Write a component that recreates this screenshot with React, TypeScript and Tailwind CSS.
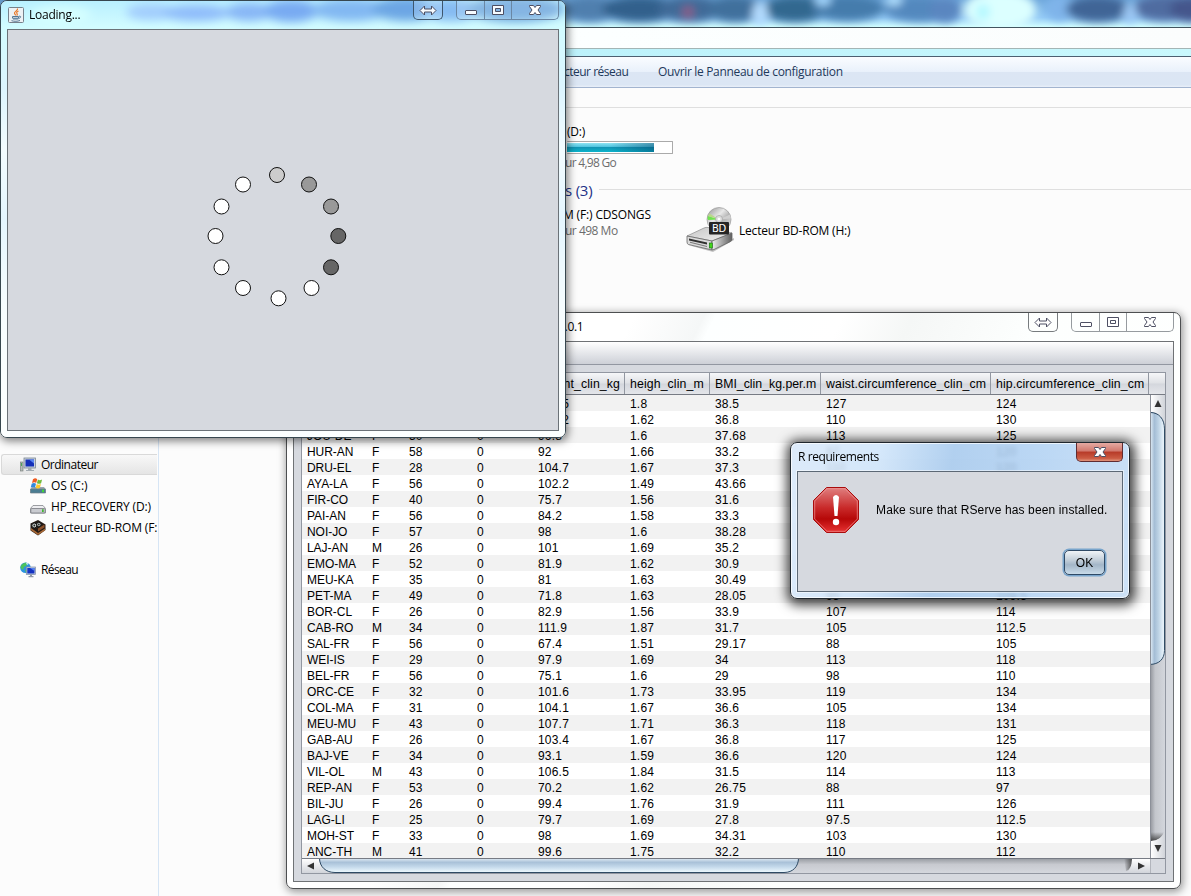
import React from "react";

type Row = [string, string, string, string, string, string, string, string, string];

const rows: Row[] = [
  ["", "", "", "", "104.5", "1.8", "38.5", "127", "124"],
  ["", "", "", "", "102.2", "1.62", "36.8", "110", "130"],
  ["JOU-DE", "F", "50", "0", "96.8", "1.6", "37.68", "113", "125"],
  ["HUR-AN", "F", "58", "0", "92", "1.66", "33.2", "97", "120"],
  ["DRU-EL", "F", "28", "0", "104.7", "1.67", "37.3", "110", "120"],
  ["AYA-LA", "F", "56", "0", "102.2", "1.49", "43.66", "", ""],
  ["FIR-CO", "F", "40", "0", "75.7", "1.56", "31.6", "", ""],
  ["PAI-AN", "F", "56", "0", "84.2", "1.58", "33.3", "", ""],
  ["NOI-JO", "F", "57", "0", "98", "1.6", "38.28", "", ""],
  ["LAJ-AN", "M", "26", "0", "101", "1.69", "35.2", "", ""],
  ["EMO-MA", "F", "52", "0", "81.9", "1.62", "30.9", "", ""],
  ["MEU-KA", "F", "35", "0", "81", "1.63", "30.49", "", ""],
  ["PET-MA", "F", "49", "0", "71.8", "1.63", "28.05", "95", "109.5"],
  ["BOR-CL", "F", "26", "0", "82.9", "1.56", "33.9", "107", "114"],
  ["CAB-RO", "M", "34", "0", "111.9", "1.87", "31.7", "105", "112.5"],
  ["SAL-FR", "F", "56", "0", "67.4", "1.51", "29.17", "88", "105"],
  ["WEI-IS", "F", "29", "0", "97.9", "1.69", "34", "113", "118"],
  ["BEL-FR", "F", "56", "0", "75.1", "1.6", "29", "98", "110"],
  ["ORC-CE", "F", "32", "0", "101.6", "1.73", "33.95", "119", "134"],
  ["COL-MA", "F", "31", "0", "104.1", "1.67", "36.6", "105", "134"],
  ["MEU-MU", "F", "43", "0", "107.7", "1.71", "36.3", "118", "131"],
  ["GAB-AU", "F", "26", "0", "103.4", "1.67", "36.8", "117", "125"],
  ["BAJ-VE", "F", "34", "0", "93.1", "1.59", "36.6", "120", "124"],
  ["VIL-OL", "M", "43", "0", "106.5", "1.84", "31.5", "114", "113"],
  ["REP-AN", "F", "53", "0", "70.2", "1.62", "26.75", "88", "97"],
  ["BIL-JU", "F", "26", "0", "99.4", "1.76", "31.9", "111", "126"],
  ["LAG-LI", "F", "25", "0", "79.7", "1.69", "27.8", "97.5", "112.5"],
  ["MOH-ST", "F", "33", "0", "98", "1.69", "34.31", "103", "130"],
  ["ANC-TH", "M", "41", "0", "99.6", "1.75", "32.2", "110", "112"],
];

const segoe = "font-['Open_Sans','Noto_Sans',sans-serif] text-[12px] leading-4 whitespace-nowrap";
const arial = "font-['Liberation_Sans',Arial,sans-serif] text-[12px] leading-4 whitespace-nowrap";

function GlassBackdrop() {
  const dark: [number, number, number, string][] = [
    [590, 9, 28, "#4f7fae"], [640, 9, 38, "#33608c"], [690, 9, 32, "#3f6a98"], [735, 9, 28, "#3f6f9c"],
    [795, 9, 32, "#33678f"], [848, 8, 36, "#447cac"], [920, 9, 36, "#5288be"], [945, 10, 16, "#5a86c0"],
    [1060, 8, 14, "#7fb4ea"], [1098, 9, 32, "#3f6596"], [1165, 8, 32, "#506ca0"], [1190, 9, 20, "#44578c"],
  ];
  return (
    <svg className="block h-[27px] w-full shrink-0" viewBox="0 0 1191 27" preserveAspectRatio="none">
      <defs>
        <filter id="soft" x="-20%" y="-60%" width="140%" height="220%"><feGaussianBlur stdDeviation="4.500" /></filter>
        <linearGradient id="sky" x1="0" y1="0" x2="0" y2="1">
          <stop offset="0" stopColor="#6fa8dc" /><stop offset="0.65" stopColor="#93caf6" /><stop offset="1" stopColor="#d3ffff" />
        </linearGradient>
      </defs>
      <rect width="1191" height="27" fill="url(#sky)" />
      <g filter="url(#soft)">
        {dark.map(([x, y, r, c]) => <ellipse key={x} cx={x} cy={y} rx={r} ry="13" fill={c} />)}
        <circle cx="688" cy="12" r="6" fill="#8c5b86" />
        <ellipse cx="760" cy="14" rx="8" ry="12" fill="#b4dcff" />
        <ellipse cx="823" cy="0" rx="8" ry="6" fill="#a5d8ff" />
        <ellipse cx="894" cy="0" rx="8" ry="6" fill="#b1e0ff" />
        <ellipse cx="1000" cy="10" rx="36" ry="20" fill="#dcffff" />
        <ellipse cx="983" cy="12" rx="7" ry="8" fill="#b4f8ff" />
        <ellipse cx="1130" cy="14" rx="7" ry="10" fill="#9cc8f5" />
      </g>
    </svg>
  );
}

function ComputerIcon() {
  return (
    <svg width="16" height="16" viewBox="0 0 16 16">
      <rect x="0.500" y="5" width="2.500" height="9" fill="#b7bdb8" stroke="#6f7774" strokeWidth=".6" />
      <rect x="1" y="6" width="1" height="3" fill="#4ca65a" />
      <rect x="4" y="1" width="11.500" height="10" fill="#c9d2dc" stroke="#7b8794" strokeWidth=".8" />
      <rect x="5.500" y="2.500" width="8.500" height="7" fill="#1630b8" />
      <path d="M9 2.500h5v4z" fill="#5b86f2" />
      <path d="M8 11h3.500v2H14v1H6v-1h2z" fill="#a3abb2" />
    </svg>
  );
}

function OsDriveIcon() {
  return (
    <svg width="16" height="16" viewBox="0 0 16 16">
      <path d="M2 9h12l1.500 2v4h-15v-4z" fill="#9aa7ae" />
      <path d="M.5 11h15v4h-15z" fill="#4b7d92" stroke="#707f87" strokeWidth=".7" />
      <rect x="12" y="11.600" width="2" height="2.600" fill="#43d339" />
      <path d="M3 1.200c2-1.400 3.200-.8 4.200 0L6.200 5C5 4 4 4 2 5z" fill="#ef5a22" />
      <path d="M7.900 1.600c1.500.8 2.700.7 4.200-.1l-1 3.800c-1.500.8-2.700.7-4.200 0z" fill="#72bb3b" />
      <path d="M1.700 5.700c1.800-.9 3-.7 4.300 0l-1 3.800c-1.500-.8-2.700-.7-4.300.1z" fill="#3288dd" />
      <path d="M6.700 6c1.400.9 2.700.8 4.200 0l-1 3.800c-1.500.8-2.700.8-4.200-.1z" fill="#ffc82a" />
    </svg>
  );
}

function DriveIcon() {
  return (
    <svg width="16" height="16" viewBox="0 0 16 16">
      <path d="M3 6.500h10l2.500 3v4.500h-15V9.500z" fill="#ededf0" stroke="#85888d" strokeWidth=".8" />
      <rect x=".8" y="9.500" width="14.400" height="4.500" rx="1" fill="#c9cbd0" stroke="#777a80" strokeWidth=".8" />
      <rect x="12" y="10.300" width="1.700" height="2.700" fill="#3fb62f" />
    </svg>
  );
}

function GameIcon() {
  return (
    <svg width="16" height="16" viewBox="0 0 16 16">
      <path d="M.5 3.500 8 0l7.500 4.500V10L8 15.500.5 10.500z" fill="#241a14" />
      <path d="m1 8 7 5 7-4.500v2L8 15l-7-4.700z" fill="#a76836" />
      <path d="m8 8.500 6.500-4v3L8 11.500z" fill="#8b5029" />
      <circle cx="4.300" cy="5.500" r="2.500" fill="#c9cdc9" stroke="#111" /><circle cx="8.800" cy="4.500" r="2.300" fill="#9da29f" stroke="#111" />
      <circle cx="4.300" cy="5.500" r=".9" fill="#222" /><circle cx="8.800" cy="4.500" r=".8" fill="#222" />
    </svg>
  );
}

function NetworkIcon() {
  return (
    <svg width="16" height="16" viewBox="0 0 16 16">
      <circle cx="5.500" cy="5.800" r="5.300" fill="#2c93e0" />
      <path d="M2 2.500C4 .5 7 .3 8 1.500L6 4 4 5 3 8 .6 6C.5 4.500 1 3.500 2 2.500zM5 8l3-1v3l-2 1z" fill="#4cc35c" />
      <path d="M6 1c1.500 0 2 .4 2.600 1L7 3z" fill="#cfeeff" />
      <rect x="6.300" y="5" width="9.200" height="7.500" fill="#c4cfe0" stroke="#7988a5" strokeWidth=".7" />
      <rect x="7.300" y="6" width="7.200" height="5.500" fill="#1432c2" /><path d="M10 6h4.500v3z" fill="#5482ef" />
      <path d="M10 12.500h2V14h1.500v1.200h-5V14H10z" fill="#9099a8" />
    </svg>
  );
}

function BdDriveIcon() {
  return (
    <svg width="48" height="46" viewBox="0 0 48 46">
      <defs>
        <linearGradient id="bdtop" x1="0" y1="0" x2="1" y2="1"><stop offset="0" stopColor="#c6c6c6" /><stop offset="1" stopColor="#f0f0f0" /></linearGradient>
        <linearGradient id="bdside" x1="0" y1="0" x2="1" y2="0"><stop offset="0" stopColor="#ededed" /><stop offset="1" stopColor="#606060" /></linearGradient>
        <linearGradient id="disc" x1="0" y1="0" x2="1" y2="1"><stop offset="0" stopColor="#8e8e8e" /><stop offset=".4" stopColor="#e8e8e8" /><stop offset=".6" stopColor="#b5b5b5" /><stop offset="1" stopColor="#efefef" /></linearGradient>
      </defs>
      <path d="M2 38 27 45 48 33v-2L27 42z" fill="#555" opacity=".35" />
      <path d="M1 29 18 21q2-1 4-.5L46 26 26 34z" fill="url(#bdtop)" stroke="#8b8b8b" strokeWidth=".7" />
      <path d="M1 29 26 34v9L2.500 37.500Q1 37 1 35z" fill="#dadada" stroke="#646464" strokeWidth=".8" />
      <path d="m26 34 20-8v6.500q0 1-1.500 2L28 42.500l-2 .5z" fill="url(#bdside)" stroke="#646464" strokeWidth=".8" />
      <path d="m3 31.500 18 4v2L3 33.500z" fill="#303030" />
      <path d="m4 34.700 17 4.200v1L4 35.700z" fill="#777" />
      <rect x="23.300" y="36" width="3" height="5" fill="#43d51b" stroke="#176b12" strokeWidth=".6" />
      <circle cx="33" cy="12.500" r="12" fill="url(#disc)" stroke="#9a9a9a" strokeWidth=".7" />
      <path d="M33 12.500 22 9q-1 2 0 4z" fill="#70e34f" /><path d="m33 12.500-9.500-6-1.500 2.500z" fill="#b9d88a" /><path d="m33 12.500 11-5 1 4z" fill="#cfcfcf" />
      <circle cx="33" cy="12" r="3.500" fill="#ddd" stroke="#999" strokeWidth=".6" /><circle cx="33" cy="12" r="1.300" fill="#fff" />
      <rect x="23" y="15" width="20" height="12.500" rx="1" fill="#252525" />
      <text x="33" y="25" textAnchor="middle" fill="#fff" fontSize="10" fontFamily="DejaVu Sans, sans-serif">BD</text>
    </svg>
  );
}

function JavaIcon() {
  return (
    <svg width="16" height="16" viewBox="0 0 16 16" className="block">
      <rect x=".5" y=".5" width="15" height="15" rx="1" fill="#edf1f4" stroke="#76818b" />
      <path d="M9.500 1.500c1 2-3.500 3-3 4.700.2 1 1 1.300 1.200 2.300M10.500 4C8.500 5 8.300 5.500 9 6.500s.3 1.300-.2 2" fill="none" stroke="#e9792a" strokeWidth="1.200" />
      <path d="M4.500 9.500h6v1.700h-6zM5 12h5.300M3.500 13.700c3 .9 6 .7 8.500-.2M11 9.200c2.500-.5 2 1.800-.3 2.300" fill="none" stroke="#557996" strokeWidth="1" />
    </svg>
  );
}

function CaptionButtons({ faded = false }: { faded?: boolean }) {
  const line = faded ? "border-[#969b9f]" : "border-[#6a87a4]";
  const inner = faded ? "#fff" : "#f6fbff";
  const ink = "#4d4f63";
  return (
    <div className="flex">
      <div className={`flex h-[19px] w-[30px] justify-center rounded-b-[5px] border border-t-0 ${faded ? "border-[#777b7e]" : "border-[#3e566d] bg-white/15"}`}>
        <svg width="18" height="18" viewBox="0 0 18 18"><path d="M1 9.500 5.500 5v3h7V5l4.500 4.500-4.500 4.500v-3h-7v3z" fill={inner} stroke={ink} /></svg>
      </div>
      <div className={`ml-[13px] flex h-[19px] w-[103px] overflow-hidden rounded-b-[5px] border border-t-0 ${line} ${faded ? "" : "bg-white/15"}`}>
        <div className={`flex w-[28px] justify-center border-r ${line}`}>
          <svg width="14" height="18" viewBox="0 0 14 18"><rect x="1.500" y="9.500" width="11" height="4" rx=".5" fill={inner} stroke={ink} /></svg>
        </div>
        <div className={`flex w-[27px] justify-center border-r ${line}`}>
          <svg width="14" height="18" viewBox="0 0 14 18"><path d="M1.500 4.500h11v9h-11zM4.500 7.500v3h5v-3z" fill={inner} stroke={ink} fillRule="evenodd" /></svg>
        </div>
        <div className="flex grow justify-center"><CloseGlyph /></div>
      </div>
    </div>
  );
}

function CloseGlyph() {
  return (
    <svg width="14" height="18" viewBox="0 0 14 18">
      <path d="M1.500 4.500h4L7 6.500l1.500-2h4v1L10 9l2.500 3.500v1h-4L7 11.500l-1.500 2h-4v-1L4 9 1.500 5.500z" fill="#fff" stroke="#4d4f63" />
    </svg>
  );
}

function Explorer() {
  return (
    <div className="flex h-[896px] flex-col bg-[#fcfcfc]">
      <GlassBackdrop />
      <div className="h-[22px] shrink-0 border-t border-b border-t-[#42545f] border-b-[#a3b5b5] bg-gradient-to-r from-[#f9fcfc] via-[#fcffff] to-[#fbfdfd]" />
      <div className="h-[7px] shrink-0 bg-gradient-to-r from-[#b9e4fb] via-[#bdf2fb] to-[#c9f8fd]" />
      <div className={`flex h-[32px] shrink-0 items-center border-t border-b border-t-[#4d5f71] border-b-[#a2b4cf] bg-[linear-gradient(#fafcff_0%,#e9f1fb_49%,#dce6f4_50%,#dbe6f4_92%,#e9eff8_100%)] pl-[564px] text-[#1e395b] ${segoe}`}>
        <span className="w-[94px] tracking-[-0.5px]">cteur réseau</span>
        <span className="tracking-[-0.33px]">Ouvrir le Panneau de configuration</span>
      </div>
      <div className="flex min-h-0 grow">
        <nav className={`flex w-[159px] shrink-0 flex-col border-r border-[#d6e5f5] pt-[366px] tracking-[-0.15px] text-black ${segoe}`}>
          <div className="mr-px ml-px flex h-[21px] items-center gap-[5px] rounded-l-[3px] border border-r-0 border-[#d9d9d9] bg-gradient-to-b from-[#f8f8f8] to-[#e5e5e5] pl-[18px] tracking-[-0.5px]"><ComputerIcon />Ordinateur</div>
          <div className="flex h-[21px] items-center gap-[5px] overflow-hidden pl-[30px] tracking-[-0.05px]"><OsDriveIcon />OS (C:)</div>
          <div className="flex h-[21px] items-center gap-[5px] overflow-hidden pl-[30px]"><DriveIcon />HP_RECOVERY (D:)</div>
          <div className="flex h-[21px] items-center gap-[5px] overflow-hidden pl-[30px]"><span className="shrink-0"><GameIcon /></span><span className="w-[106px] overflow-hidden">Lecteur BD-ROM (F:</span></div>
          <div className="mt-[21px] flex h-[21px] items-center gap-[5px] pl-[20px] tracking-[-0.6px]"><NetworkIcon />Réseau</div>
        </nav>
        <main className={`flex grow flex-col pt-[19px] tracking-[-0.2px] ${segoe}`}>
          <div className="h-px bg-[#dfdfdf]" />
          <div className="mt-[16px] flex flex-col pl-[408px]">
            <span className="text-black">(D:)</span>
            <div className="mt-px flex h-[13px] w-[106px] rounded-[1px] border border-l-0 border-[#aaa] bg-white p-px pl-0">
              <div className="w-[87px] bg-[linear-gradient(90deg,transparent_50%,rgba(0,60,100,0.45)_100%),linear-gradient(#8fe3f2_0%,#45bfdc_49%,#1295b4_50%,#0bb4cb_100%)]" />
            </div>
            <span className="mt-px -ml-[2px] tracking-[-0.7px] text-[#6d6d6d]">ur 4,98 Go</span>
          </div>
          <div className="mt-[8px] flex h-[21px] items-center gap-[7px] pl-[406px] text-[15px] tracking-[-0.2px] text-[#1e3287]">
            <span>s (3)</span><div className="h-px grow bg-[#dfdfdf]" />
          </div>
          <div className="mt-[7px] flex pl-[404px]">
            <div className="flex w-[123px] flex-col">
              <span className="tracking-[-0.15px] text-black">M (F:) CDSONGS</span><span className="ml-[2px] tracking-[-0.5px] text-[#6d6d6d]">ur 498 Mo</span>
            </div>
            <BdDriveIcon />
            <span className="mt-[16px] ml-[5px] text-black">Lecteur BD-ROM (H:)</span>
          </div>
        </main>
      </div>
    </div>
  );
}

const cell = "shrink-0 border-r border-[#9297a1] pt-[3px] pl-[5px] h-full";

function DataWindow() {
  return (
    <section className="absolute top-[312px] left-[286px] flex h-[577px] w-[895px] flex-col rounded-[7px] border border-[#4d4f51] bg-[linear-gradient(115deg,#fff_0%,#fff_30%,#f5f7f7_36%,#fdffff_37%,#fff_48%,#f5f7f6_54%,#fdfffe_65%,#fff_100%)] px-[6px] pb-[6px] shadow-[1px_2px_9px_1px_rgba(0,0,0,0.4)]">
      <header className="flex h-[28px] shrink-0 justify-between">
        <span className={`mt-[6px] ml-[265px] tracking-[-0.3px] text-black ${segoe}`}>1.0.1</span>
        <CaptionButtons faded />
      </header>
      <div className="flex min-h-0 grow flex-col border border-[#6f7275] bg-[#d6d9df]">
        <div className="h-[23px] shrink-0 border-b border-[#9297a1] bg-gradient-to-b from-white to-[#cdd0d7]" />
        <div className={`mx-[7px] mt-[7px] mb-[7px] flex min-h-0 grow flex-col border border-[#9297a1] text-black ${arial}`}>
          <div className="flex h-[22px] shrink-0 border-b border-[#777b84] bg-[linear-gradient(#f6f7f9_0%,#dfe1e5_48%,#d4d7dd_52%,#e4e6ea_100%)] text-[12.300px] tracking-[0.110px]">
            <div className={`${cell} w-[323px] pr-[4px] text-right`}>weight_clin_kg</div>
            <div className={`${cell} w-[85px]`}>heigh_clin_m</div>
            <div className={`${cell} w-[111px] tracking-[0px]`}>BMI_clin_kg.per.m</div>
            <div className={`${cell} w-[170px]`}>waist.circumference_clin_cm</div>
            <div className={`${cell} w-[158px]`}>hip.circumference_clin_cm</div>
          </div>
          <div className="flex min-h-0 grow">
            <div className="flex w-[848px] shrink-0 flex-col overflow-hidden">
              {rows.map((r, i) => (
                <div key={i} className="grid h-[16px] shrink-0 grid-cols-[65px_37px_68px_61px_92px_85px_111px_170px_150px] bg-white pt-px pl-[5px] leading-4 odd:bg-[#f2f2f2]">
                  {r.map((v, j) => <span key={j} className={j === 0 ? "tracking-[-0.050px]" : "tracking-[0.200px]"}>{v}</span>)}
                </div>
              ))}
            </div>
            <VerticalScroll />
          </div>
          <HorizontalScroll />
        </div>
      </div>
    </section>
  );
}

function VerticalScroll() {
  return (
    <div className="flex w-[15px] shrink-0 flex-col border-l border-[#8c9099] bg-[linear-gradient(90deg,#9a9da4_0%,#c3c6cc_30%,#d3d6dc_100%)]">
      <svg width="14" height="464" viewBox="0 0 14 464" className="block">
        <defs>
          <linearGradient id="vt" x1="0" x2="1"><stop offset="0" stopColor="#e6f0f8" /><stop offset=".3" stopColor="#a4bdd5" /><stop offset=".6" stopColor="#bfd4e6" /><stop offset="1" stopColor="#f0f9ff" /></linearGradient>
          <linearGradient id="vb" x1="0" x2="1"><stop offset="0" stopColor="#fff" /><stop offset="1" stopColor="#d1d4da" /></linearGradient>
          <linearGradient id="vs" x1="0" y1="0" x2="0" y2="1"><stop offset="0" stopColor="#333" stopOpacity="0" /><stop offset="1" stopColor="#333" stopOpacity=".85" /></linearGradient>
        </defs>
        <path d="M0 0h14v30Q10 17 0 17z" fill="url(#vb)" /><path d="m3.500 12 3.500-7 3.500 7z" fill="#333" />
        <path d="M-1 17.500C8 17.500 13.500 24 13.500 34V256c0 9-6 14-14.500 14z" fill="url(#vt)" stroke="#2e4a64" />
        <path d="M0 438h13Q10 447 0 447z" fill="url(#vs)" />
        <path d="M0 447Q10 447 14 437v27H0z" fill="url(#vb)" /><path d="m3.500 451 3.500 7 3.500-7z" fill="#333" />
      </svg>
    </div>
  );
}

function HorizontalScroll() {
  return (
    <div className="h-[15px] shrink-0 border-t border-[#777b84] bg-[#d6d9df]">
      <svg width="862" height="14" viewBox="0 0 862 14" className="block">
        <defs>
          <linearGradient id="ht" x1="0" y1="0" x2="0" y2="1"><stop offset="0" stopColor="#e6f0f8" /><stop offset=".3" stopColor="#a9c1d8" /><stop offset=".6" stopColor="#c3d8ea" /><stop offset="1" stopColor="#effaff" /></linearGradient>
          <linearGradient id="hb" x1="0" y1="0" x2="0" y2="1"><stop offset="0" stopColor="#fff" /><stop offset="1" stopColor="#d1d4da" /></linearGradient>
          <linearGradient id="htr" x1="0" y1="0" x2="0" y2="1"><stop offset="0" stopColor="#9b9fa5" /><stop offset=".4" stopColor="#c8cad0" /><stop offset="1" stopColor="#d4d7dd" /></linearGradient>
          <linearGradient id="hs"><stop offset="0" stopColor="#333" stopOpacity="0" /><stop offset="1" stopColor="#333" stopOpacity=".8" /></linearGradient>
        </defs>
        <rect width="848" height="14" fill="url(#htr)" />
        <path d="M0 0h17q1 10 13 14H0z" fill="url(#hb)" /><path d="m12 3.500-7 3.500 7 3.500z" fill="#333" />
        <path d="M17.500-1C17.500 8 24 13.500 33 13.500H482c9 0 14.500-6 14.500-14.500z" fill="url(#ht)" stroke="#2e4a64" />
        <path d="M822 0h8q0 10-6 12z" fill="url(#hs)" />
        <path d="M830 0q0 10-6 14h24V0z" fill="url(#hb)" /><path d="m836 3.500 7 3.500-7 3.500z" fill="#333" />
        <path d="M848.500 0v14" stroke="#b2b5bc" />
      </svg>
    </div>
  );
}

const dots: [number, number, string][] = [
  [277, 175, "#ccc"], [309, 184.500, "#999"], [331, 206.500, "#999"], [338.300, 236, "#666"], [331, 267.300, "#666"], [311.500, 288, "#fff"],
  [278.500, 298.300, "#fff"], [243, 288, "#fff"], [221.500, 267.300, "#fff"], [215.500, 236, "#fff"], [221.500, 206.500, "#fff"], [243, 184.500, "#fff"],
];

function LoadingWindow() {
  return (
    <section className="absolute top-0 left-0 flex h-[438px] w-[566px] flex-col rounded-[7px] border border-[#37474f] bg-white/60 px-[6px] pb-[6px] shadow-[1px_2px_9px_1px_rgba(0,0,0,0.5)] backdrop-blur-[3px]">
      <div className="absolute inset-0 -z-10 overflow-hidden rounded-[6px]">
        <div className="h-full bg-[linear-gradient(#b9f0ff_0%,#d2fcff_6%,#dcf5ff_20%,#f3fcff_34%,#e4f6ff_50%,#f6fdff_70%,#fcffff_100%)]" />
      </div>
      <svg className="absolute top-0 left-0 -z-10" width="564" height="28" viewBox="0 0 564 28">
        <defs><filter id="haze" x="-10%" y="-80%" width="120%" height="260%"><feGaussianBlur stdDeviation="5" /></filter></defs>
        <g filter="url(#haze)">
          <ellipse cx="150" cy="11" rx="25" ry="8" fill="#a2cdfd" /><ellipse cx="195" cy="12" rx="34" ry="8" fill="#8fbcfa" />
          <ellipse cx="248" cy="11" rx="24" ry="9" fill="#87b6f6" /><ellipse cx="290" cy="10" rx="28" ry="11" fill="#78aaf2" />
          <ellipse cx="350" cy="9" rx="40" ry="11" fill="#82b8f2" /><ellipse cx="405" cy="8" rx="34" ry="12" fill="#6ca6e4" />
          <ellipse cx="450" cy="9" rx="30" ry="11" fill="#86bbf2" /><ellipse cx="515" cy="8" rx="48" ry="13" fill="#6fa8de" />
          <ellipse cx="60" cy="14" rx="30" ry="9" fill="#d5ffff" />
        </g>
      </svg>
      <header className="flex h-[28px] shrink-0 justify-between">
        <div className={`flex gap-[5px] pt-[6px] pl-px tracking-[-0.25px] text-black ${segoe}`}><JavaIcon /><span>Loading...</span></div>
        <CaptionButtons />
      </header>
      <div className="grow border border-[#6b7278] bg-[#d6d9df]">
        <svg width="550" height="400" viewBox="8 30 550 400" className="block">
          {dots.map(([x, y, c]) => <circle key={`${x}-${y}`} cx={x} cy={y} r="7.500" fill={c} stroke="#111" />)}
        </svg>
      </div>
    </section>
  );
}

function RequirementsDialog() {
  return (
    <section className="absolute top-[442px] left-[790px] flex h-[157px] w-[340px] flex-col rounded-[7px] border border-[#20272e] bg-[linear-gradient(100deg,rgba(216,232,250,.87)_0%,rgba(206,228,250,.87)_25%,rgba(166,201,237,.87)_45%,rgba(178,210,243,.87)_70%,rgba(198,222,247,.87)_100%)] px-[6px] pb-[6px] shadow-[1px_2px_12px_4px_rgba(0,0,0,0.75)] ring-1 ring-white/70 backdrop-blur-[2px] ring-inset">
      <header className="flex h-[28px] shrink-0 justify-between">
        <span className={`mt-[6px] ml-px tracking-[-0.42px] text-black ${segoe}`}>R requirements</span>
        <div className="flex h-[19px] w-[47px] justify-center rounded-b-[5px] border border-t-0 border-[#602c31] bg-[linear-gradient(#e5aaa2_0%,#d1786d_45%,#b73a28_50%,#cb5b43_85%,#e1957d_100%)]"><CloseGlyph /></div>
      </header>
      <div className="flex grow flex-col border border-[#5c6875] bg-[#d6d9df] ring-1 ring-white/50">
        <div className="flex pt-[15px] pl-[15px]">
          <svg width="46" height="46" viewBox="0 0 46 46">
            <defs><linearGradient id="stop" x1="0" y1="0" x2="0" y2="1"><stop offset="0" stopColor="#e08080" /><stop offset=".45" stopColor="#c92a2a" /><stop offset=".7" stopColor="#b60808" /><stop offset="1" stopColor="#e83333" /></linearGradient></defs>
            <path d="M13.500.5h19l13 13v19l-13 13h-19l-13-13v-19z" fill="url(#stop)" stroke="#a90c0c" />
            <path d="M14 1.700h18L44.300 14v18L32 44.300H14L1.700 32V14z" fill="none" stroke="#f29a9a" strokeOpacity=".65" />
            <path d="M20 10q3-4 6 0l-1.500 19h-3z" fill="#fff" /><circle cx="23" cy="35" r="3.200" fill="#fff" />
          </svg>
          <span className={`mt-[15px] ml-[17px] tracking-[0.130px] text-black ${arial}`}>Make sure that RServe has been installed.</span>
        </div>
        <button className={`mt-[17px] mr-[17px] h-[25px] w-[41px] self-end rounded-[5px] border border-[#2f4a66] bg-[linear-gradient(#f0f4f7_0%,#c2ced9_40%,#a3b6c8_60%,#c9dbe9_100%)] text-black shadow-[0_0_0_1.500px_#79a5cc] ${arial}`}>OK</button>
      </div>
    </section>
  );
}

export default function App() {
  return (
    <div className="relative h-[896px] w-[1191px] overflow-hidden">
      <Explorer />
      <DataWindow />
      <LoadingWindow />
      <RequirementsDialog />
    </div>
  );
}
